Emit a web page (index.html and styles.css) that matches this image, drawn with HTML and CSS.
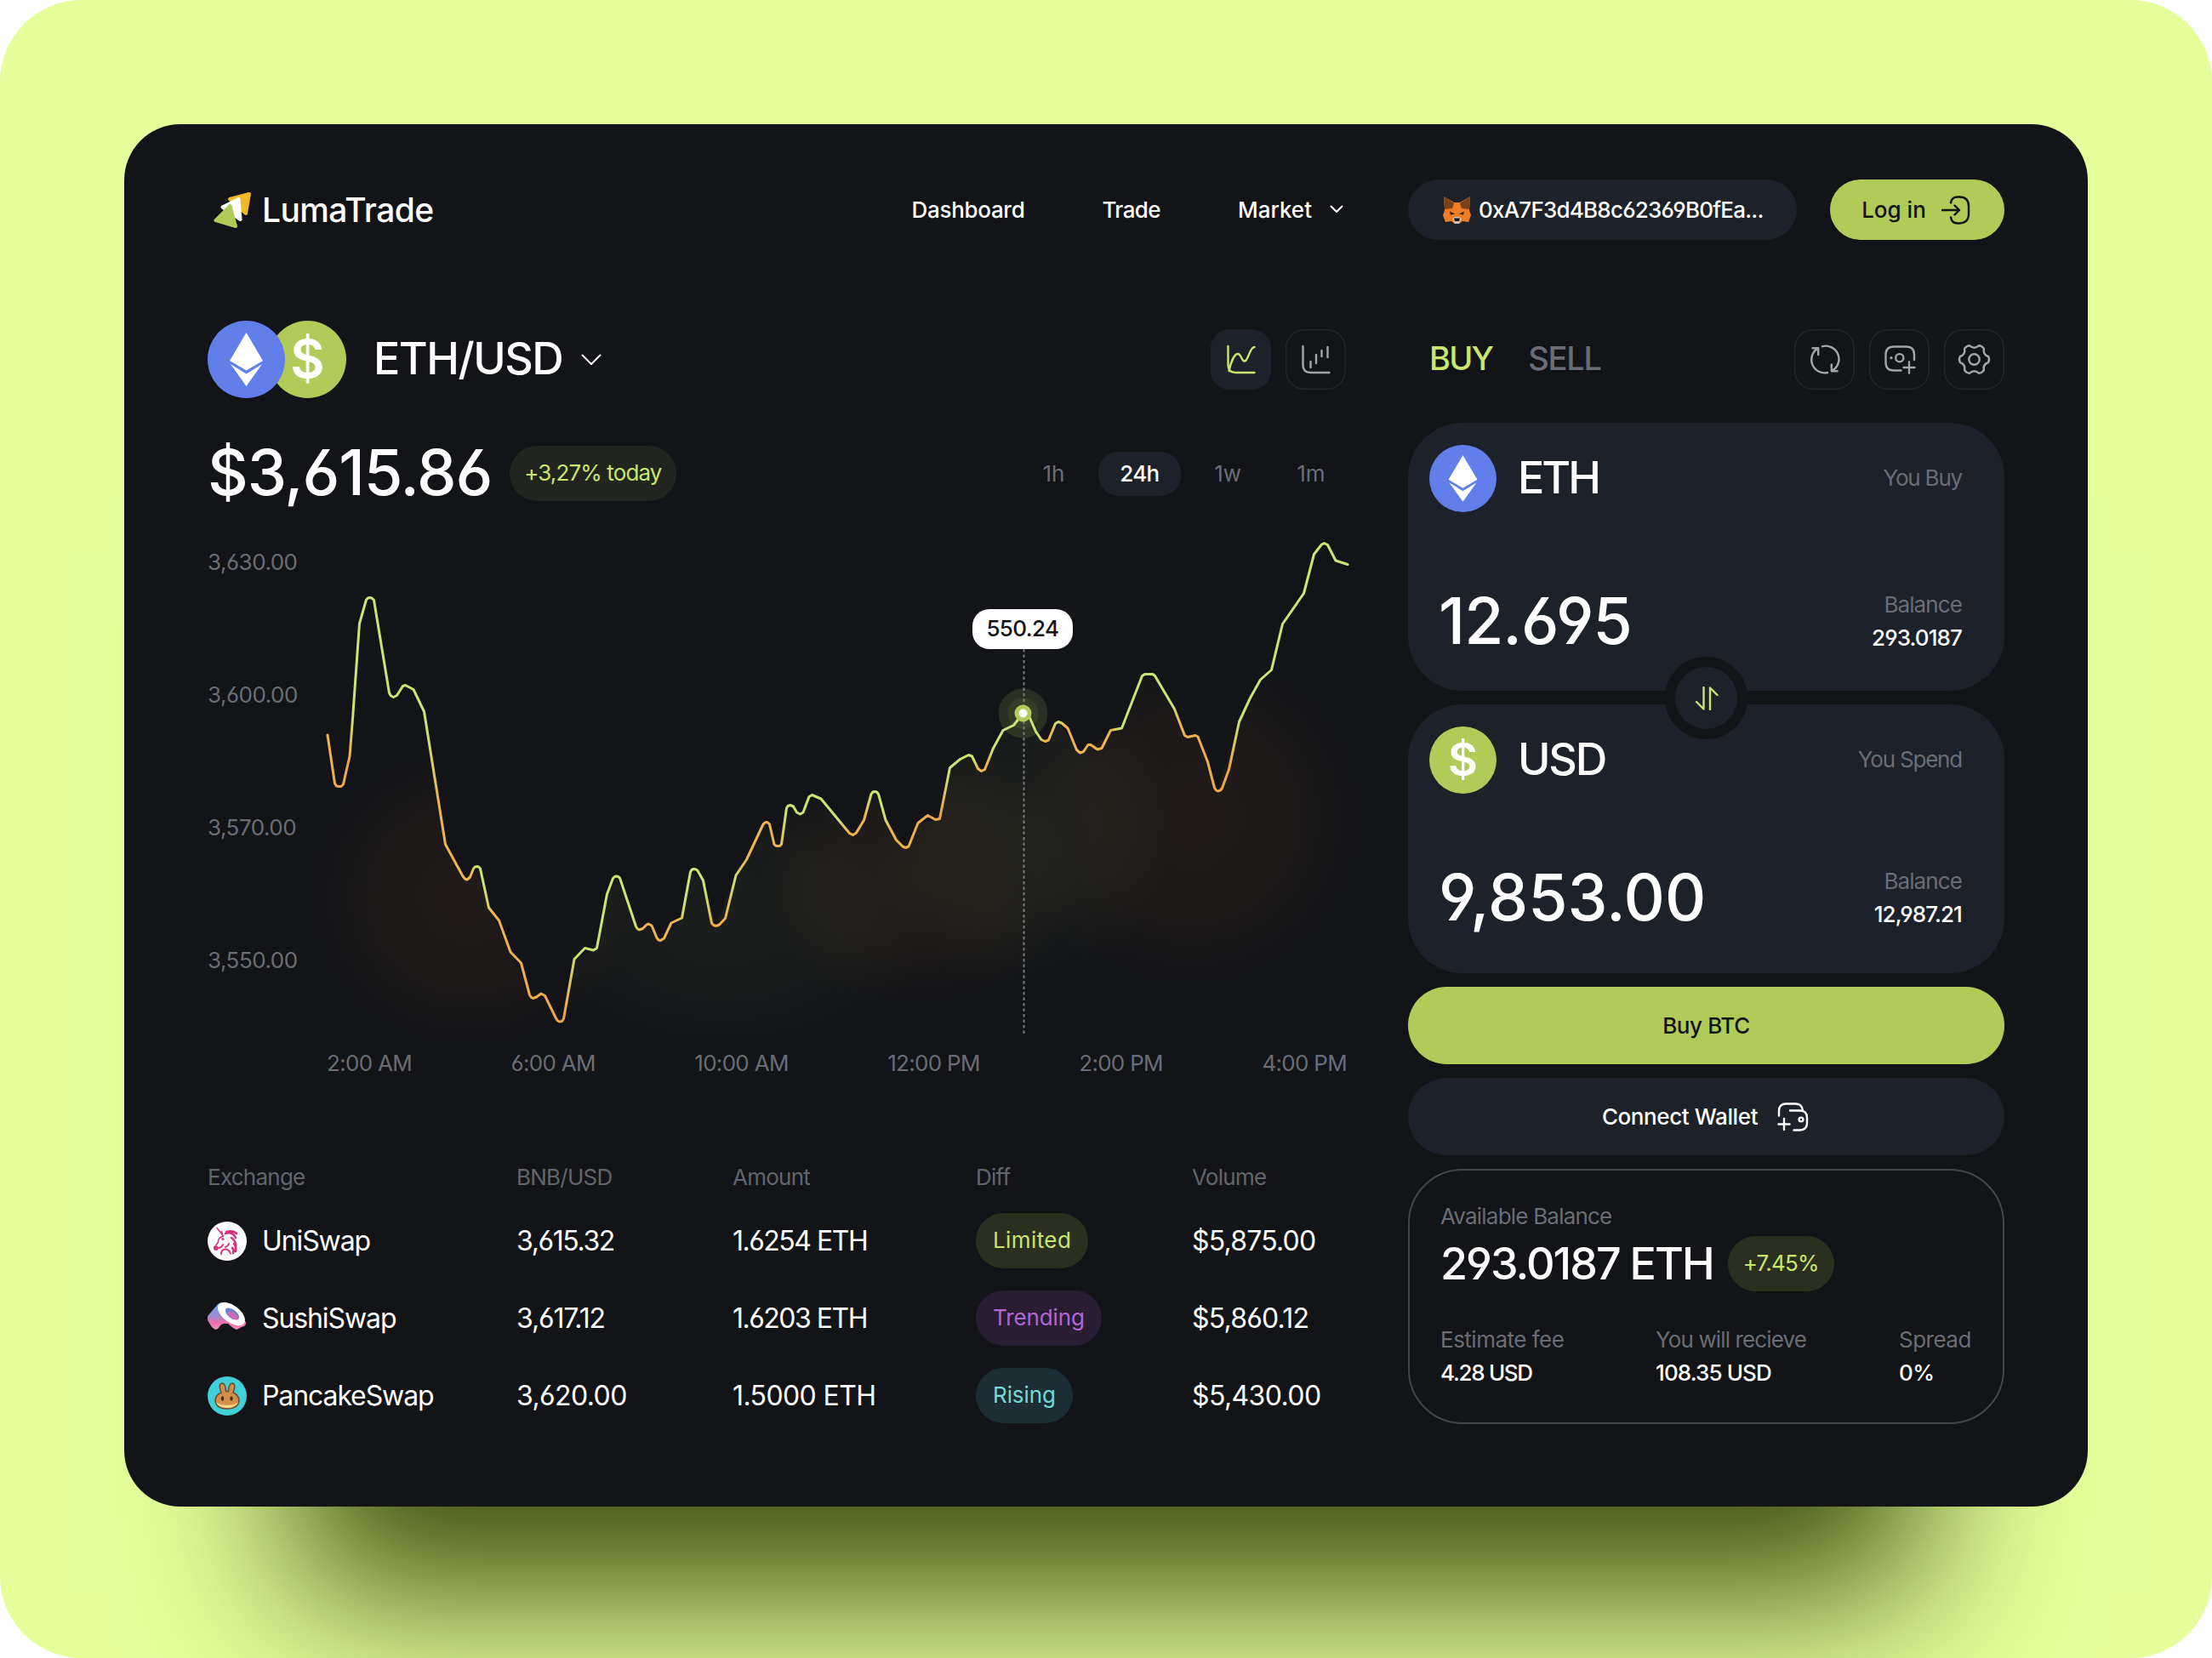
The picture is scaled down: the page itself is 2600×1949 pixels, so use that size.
FILE: index.html
```html
<!DOCTYPE html>
<html lang="en">
<head>
<meta charset="utf-8">
<title>LumaTrade</title>
<link rel="stylesheet" href="styles.css">
</head>
<body>
<div class="stage">
<main class="card">
  <header class="header">
    <div class="header-left">
      <a class="logo">
        <svg class="logo-mark" viewBox="0 0 50 46" width="50" height="46">
          <g stroke-width="4" stroke-linejoin="round">
            <path d="M22 10 45 4 41 27z" fill="#f0b824" stroke="#f0b824"/>
            <path d="M13.500 19.500 32.500 10 34.500 34z" fill="#fff" stroke="#fff"/>
            <path d="M22.500 18 5.500 35 29 42z" fill="#b1cb58" stroke="#b1cb58"/>
          </g>
        </svg>
        <span class="logo-name">LumaTrade</span>
      </a>
      <nav class="nav">
        <a class="nav-dashboard">Dashboard</a>
        <a class="nav-trade">Trade</a>
        <a class="nav-menu"><span>Market</span><svg width="16" height="10" viewBox="0 0 16 10"><path d="M1.500 1.500 8 8l6.500-6.500" class="line line-thin"/></svg></a>
      </nav>
    </div>
    <div class="header-right">
      <div class="wallet">
        <svg width="33" height="32" viewBox="0 0 33 32">
          <path d="M1 0 13 7h7L32 0l-1 16 2 6-3 8-7-1-4 3h-5l-4-3-7 1-3-8 2-6z" fill="#ee7d23"/>
          <path d="M1 0 13 8l-2 6-9 1zM32 0 20 8l2 6 9 1z" fill="#7d3f17"/>
          <path d="M8 17.500l6 3-5 1zM25 17.500l-6 3 5 1z" fill="#2a2018"/>
          <path d="M11 26l3-2h5l3 2-3 6h-5z" fill="#cfc3ba"/>
          <path d="M13 25.500h7l-1 3.500h-5z" fill="#17171a"/>
        </svg>
        <span class="address">0xA7F3d4B8c62369B0fEa...</span>
      </div>
      <button class="login"><span>Log in</span>
        <svg width="36" height="36" viewBox="0 0 36 36"><path d="M12 9.500Q13 2.500 20 2.500h2q11 0 11 11v9q0 11-11 11h-2q-7 0-8-7M2 18h20M16.500 12.500 22 18l-5.500 5.500" class="line"/></svg>
      </button>
    </div>
  </header>

  <div class="columns">
    <section class="market">
      <div class="pair-row">
        <div class="pair">
          <div class="coins">
            <svg class="coin coin-front" width="91" height="91" viewBox="0 0 91 91"><circle cx="45.500" cy="45.500" r="45.500" fill="#627eea"/><path d="M45.500 14 26 47l19.500 11.500L65 47zM27 51l18.500 11.500L64 51 45.500 77z" fill="#fff"/></svg>
            <svg class="coin coin-back" width="91" height="91" viewBox="0 0 91 91"><circle cx="45.500" cy="45.500" r="45.500" fill="#b1cb58"/><text x="45.500" y="66.500" text-anchor="middle" class="coin-sign">$</text></svg>
          </div>
          <span class="pair-name">ETH/USD</span>
          <svg width="24" height="14" viewBox="0 0 24 14"><path d="M1.500 1.500 12 12 22.500 1.500" class="line line-thin"/></svg>
        </div>
        <div class="tools market-tools">
          <button class="tool tool-active"><svg viewBox="0 0 71 71"><path d="M20.500 20v22q0 9 9 9h22M21.500 49C24 38 28 29 32 29s4 8.500 8 8.500S46 21 51.500 21" class="line"/></svg></button>
          <button class="tool"><svg viewBox="0 0 71 71"><path d="M20.500 20v22q0 9 9 9h22M29.500 38v7M36 30v10M42.500 25v7M49.500 21v12" class="line"/></svg></button>
        </div>
      </div>
      <div class="price-row">
        <span class="price">$3,615.86</span>
        <span class="pill pill-dim">+3,27% today</span>
        <div class="ranges"><span>1h</span><span class="range-active">24h</span><span>1w</span><span>1m</span></div>
      </div>
      <div class="chart">
        <div class="y-axis"><span>3,630.00</span><span>3,600.00</span><span>3,570.00</span><span>3,550.00</span></div>
        <div class="x-axis"><span>2:00 AM</span><span>6:00 AM</span><span>10:00 AM</span><span>12:00 PM</span><span>2:00 PM</span><span>4:00 PM</span></div>
        <svg class="plot" viewBox="244 620 1380 650" width="1380" height="650">
          <defs>
            <linearGradient id="trend" gradientUnits="userSpaceOnUse" x1="385" y1="0" x2="1585" y2="0">
              <stop offset="0" stop-color="#f0b350"/><stop offset=".021" stop-color="#f0a548"/><stop offset=".025" stop-color="#c9e672"/>
              <stop offset=".097" stop-color="#c9e672"/><stop offset=".108" stop-color="#f0b350"/><stop offset=".140" stop-color="#f0b350"/>
              <stop offset=".146" stop-color="#c9e672"/><stop offset=".153" stop-color="#c9e672"/><stop offset=".162" stop-color="#f0b350"/>
              <stop offset=".232" stop-color="#f0a548"/><stop offset=".244" stop-color="#c9e672"/><stop offset=".300" stop-color="#c9e672"/>
              <stop offset=".308" stop-color="#f0b350"/><stop offset=".344" stop-color="#f0b350"/><stop offset=".350" stop-color="#c9e672"/>
              <stop offset=".370" stop-color="#c9e672"/><stop offset=".378" stop-color="#f0a548"/><stop offset=".390" stop-color="#f0b350"/>
              <stop offset=".399" stop-color="#c9e672"/><stop offset=".408" stop-color="#f0b350"/><stop offset=".443" stop-color="#f0b350"/>
              <stop offset=".449" stop-color="#c9e672"/><stop offset=".500" stop-color="#c9e672"/><stop offset=".510" stop-color="#f0b350"/>
              <stop offset=".526" stop-color="#f0b350"/><stop offset=".533" stop-color="#c9e672"/><stop offset=".544" stop-color="#c9e672"/>
              <stop offset=".552" stop-color="#f0b350"/><stop offset=".601" stop-color="#f0a548"/><stop offset=".609" stop-color="#c9e672"/>
              <stop offset=".632" stop-color="#c9e672"/><stop offset=".638" stop-color="#f0b350"/><stop offset=".646" stop-color="#f0b350"/>
              <stop offset=".652" stop-color="#c9e672"/><stop offset=".696" stop-color="#c9e672"/><stop offset=".702" stop-color="#f0b350"/>
              <stop offset=".709" stop-color="#f0b350"/><stop offset=".715" stop-color="#c9e672"/><stop offset=".722" stop-color="#f0b350"/>
              <stop offset=".768" stop-color="#f0b350"/><stop offset=".776" stop-color="#c9e672"/><stop offset=".826" stop-color="#c9e672"/>
              <stop offset=".836" stop-color="#f0b350"/><stop offset=".883" stop-color="#f0a548"/><stop offset=".893" stop-color="#c9e672"/>
              <stop offset="1" stop-color="#c9e672"/>
            </linearGradient>
            <radialGradient id="warm"><stop offset="0" stop-color="#ff8c32" stop-opacity=".065"/><stop offset=".55" stop-color="#ff8c32" stop-opacity=".045"/><stop offset="1" stop-color="#ff8c32" stop-opacity="0"/></radialGradient>
            <radialGradient id="fresh"><stop offset="0" stop-color="#c9e672" stop-opacity=".05"/><stop offset=".55" stop-color="#c9e672" stop-opacity=".035"/><stop offset="1" stop-color="#c9e672" stop-opacity="0"/></radialGradient>
            <clipPath id="under"><path d="M330 1270V863H385L393.500 921 403.500 922 411 889 422.500 733 434.500 702 457.500 814 498.500 836.500 523.500 992.500 549 1034 564.500 1021 574.500 1067 600 1119 626.500 1173 636 1168 657.500 1201 675 1127.500 701.500 1114.500 713.500 1051 724.500 1030 751.500 1093 762 1086 776.500 1105.500 801.500 1079 811.500 1025 826.500 1035 841.500 1088.500 865 1029 900.500 966.500 914 994.500 924.500 950 940.500 957 954.500 934.500 1002.500 981.500 1028 930.500 1041 964 1064.500 996.500 1079 967.500 1104.500 962.500 1116.500 902.500 1138.500 887.500 1153.500 906.500 1179 858.500 1202.500 838.500 1228.500 871.500 1244 848.500 1269.500 885 1318.500 856 1345.500 792.500 1355 792.500 1396 866.500 1408 866 1431.500 930 1456.500 848.500 1494.500 787.500 1507.500 733.500 1556.500 638.500 1584 663.500 1624 700V1270z"/></clipPath>
          </defs>
          <g clip-path="url(#under)">
            <ellipse cx="550" cy="1055" rx="200" ry="190" fill="url(#warm)"/>
            <ellipse cx="850" cy="1080" rx="250" ry="165" fill="url(#fresh)"/>
            <ellipse cx="1080" cy="1030" rx="190" ry="160" fill="url(#warm)"/>
            <ellipse cx="1200" cy="970" rx="180" ry="200" fill="url(#fresh)"/>
            <ellipse cx="1400" cy="960" rx="215" ry="215" fill="url(#warm)"/>
          </g>
          <circle cx="1202.500" cy="838.500" r="29" fill="#c9e672" fill-opacity=".13"/>
          <circle cx="1202.500" cy="838.500" r="18" fill="#c9e672" fill-opacity=".08"/>
          <path d="M1203.500 763V1216" stroke="#77797c" stroke-width="2" stroke-dasharray="3.500 3"/>
          <polyline class="series" points="385,864 393.500,921 395.500,924 398,924.500 401,924.500 403.500,922 411,889 414.500,845 422.500,733 430.500,705 432.500,703 434.500,702.500 437,703 439.500,705.500 457.500,814.500 459.500,818 462.500,819.500 466.500,817.500 473.500,806.500 476.500,805.500 486,810.500 498.500,836.500 523.500,992.500 544,1030 546.500,1033 549,1034 552.500,1031 556.500,1021 558.500,1019 560.500,1018.500 562.500,1019 564.500,1021 574.500,1067 586.500,1082 600,1119 612.500,1132 622.500,1169.500 624.500,1172.500 626.500,1173.500 630.500,1172 636,1168 640.500,1170.500 653.500,1197 655.500,1200 657.500,1201 660.500,1200.500 662.500,1197.500 675,1127.500 687.500,1114.500 697.500,1117 701.500,1114.500 713.500,1051 720.500,1032.500 722.500,1030.500 724.500,1030 726.500,1030.500 728.500,1032 747.500,1089 749.500,1092 751.500,1093 755.500,1091.500 760,1087 762,1086 766,1088 772,1102.500 774,1105 776.500,1105.500 780.500,1103 789,1085 801.500,1079 811.500,1025 813,1022.500 815.500,1021.500 818,1022 820,1023.500 826.500,1035 836.500,1085 838.500,1087.500 841.500,1088.500 845.500,1087 852.500,1079.500 865,1029 877.500,1010.500 896.500,970 898.500,967.500 900.500,966.500 902.500,967 904.500,969 910,992.500 911.500,994 914,994.500 916.500,994.500 918.500,992.500 924.500,950 926,947.500 929,946.500 932.500,948 936.500,955 940.500,957 944,955 951,936.500 954.500,934.500 965,939 998.500,979.500 1002.500,981.500 1006.500,979 1015.500,964 1024,933.500 1026,931 1028,930.500 1030.500,931 1032.500,933.500 1041,964 1053.500,987.500 1061,995 1064.500,996.500 1068,995 1079,967.500 1090.500,958.500 1099.500,963.500 1104.500,962.500 1116.500,902.500 1128.500,892.500 1138.500,887.500 1142.500,889 1149.500,903.500 1153.500,906.500 1157.500,904.500 1167.500,879.500 1179,858.500 1191.500,852.500 1202.500,838.500 1210.500,844 1217.500,860 1224,869.500 1228.500,871.500 1232.500,870 1240.500,850.500 1244,848.500 1248,850 1255,856 1265.500,881.500 1269.500,885 1273.500,883.500 1279,875.500 1282,875.500 1290,881 1295,879.500 1305.500,858.500 1318.500,856 1342.500,794.500 1345.500,792.500 1355,792.500 1357.500,794.500 1380.500,833.500 1392.500,864.500 1396,866.500 1405,864.500 1408,866 1419.500,895.500 1427.500,926 1429.500,929 1431.500,930 1434.500,929 1436.500,926.500 1444.500,904.500 1456.500,848.500 1469.500,820.500 1481.500,799 1494.500,787.500 1507.500,733.500 1532.500,697.500 1544.500,651.500 1553.500,640 1556.500,638.500 1560.500,640.500 1570,659 1584,663.500"/>
          <circle cx="1202.500" cy="838.500" r="7.500" fill="#fff" stroke="#b1cb58" stroke-width="5"/>
        </svg>
        <div class="tooltip">550.24</div>
      </div>
      <div class="table">
        <div class="row row-head"><span>Exchange</span><span>BNB/USD</span><span>Amount</span><span>Diff</span><span>Volume</span></div>
        <div class="row">
          <span class="exchange">
            <svg width="46" height="46" viewBox="0 0 46 46">
              <circle cx="23" cy="23" r="23" fill="#fff"/>
              <g fill="none" stroke="#d6317f" stroke-linecap="round" stroke-linejoin="round">
                <path d="M11 7.500 18.500 17M16.500 11.500l1.500 5M18.500 17Q12 19 12.500 24L8 30.500" stroke-width="1.500"/>
                <path d="M21 14q8-3 12 5M22 12q8-2 12 2M28 19q6 4 5 11M31 26q3 4 2 9M29 31q3 3 1 6" stroke-width="2.600"/>
                <path d="M13 31q4-1 5-4M16 38q0-5.500 5-5.500 4 0 6 5M21 30q3-1 4-4" stroke-width="2"/>
              </g>
              <path d="M7.500 29q3-1.500 5.500 1.500 0 4-4 3.500-3-1-1.500-5z" fill="#d6317f"/>
              <circle cx="18" cy="20.500" r="1.600" fill="#d6317f"/>
            </svg>UniSwap</span>
          <span class="rate">3,615.32</span><span class="amount">1.6254 ETH</span>
          <span><span class="pill pill-lime pill-wide">Limited</span></span><span class="volume">$5,875.00</span>
        </div>
        <div class="row">
          <span class="exchange">
            <svg width="46" height="46" viewBox="0 0 46 46">
              <defs><linearGradient id="roll" x1="0" y1="0" x2="0" y2="1"><stop offset="0" stop-color="#4fa9ea"/><stop offset=".5" stop-color="#a08ad0"/><stop offset=".75" stop-color="#ee6fa8"/><stop offset="1" stop-color="#f092c4"/></linearGradient></defs>
              <path d="M12 6Q15 3 22 5L45 27q1 5-5 6l-6 3-4-2-6-5h-5l-3 1-4 5-3 1-4-3-5-8q-1-3 1-6z" fill="url(#roll)"/>
              <ellipse cx="28" cy="17.500" rx="18.500" ry="10" transform="rotate(37 28 17.500)" fill="#fff"/>
              <ellipse cx="29" cy="17.500" rx="9.500" ry="5" transform="rotate(37 29 17.500)" fill="#6c7fd0"/>
              <ellipse cx="30" cy="19.500" rx="7" ry="3" transform="rotate(37 30 19.500)" fill="#d765ae"/>
            </svg>SushiSwap</span>
          <span class="rate">3,617.12</span><span class="amount">1.6203 ETH</span>
          <span><span class="pill pill-violet">Trending</span></span><span class="volume">$5,860.12</span>
        </div>
        <div class="row">
          <span class="exchange">
            <svg width="46" height="46" viewBox="0 0 46 46">
              <circle cx="23" cy="23" r="23" fill="#41d0da"/>
              <path d="M16 19q-4-10 1-11 4 0 4.500 9.500h3Q25 8 29 8q5 1 1 11 7 3 7 9.500Q36 38 23 38T9 28.500Q9 22 16 19z" fill="#d38f4a" stroke="#6b4a2b" stroke-width="1.500"/>
              <path d="M10 30.500Q13 37 23 37t13-6.500Q30 34 23 34t-13-3.500z" fill="#f9dc8e"/>
              <ellipse cx="17.500" cy="26" rx="1.700" ry="2.700" fill="#4a2c1a"/><ellipse cx="28" cy="26" rx="1.700" ry="2.700" fill="#4a2c1a"/>
            </svg>PancakeSwap</span>
          <span class="rate">3,620.00</span><span class="amount">1.5000 ETH</span>
          <span><span class="pill pill-cyan">Rising</span></span><span class="volume">$5,430.00</span>
        </div>
      </div>
    </section>

    <section class="trade">
      <div class="trade-head">
        <div class="tabs"><span class="tab-active">BUY</span><span>SELL</span></div>
        <div class="tools">
          <button class="tool"><svg viewBox="0 0 71 71"><path d="M33 20.200A15.500 15.500 0 0 1 44 49M50.500 49.200H43.800V41.500M39 51A15.500 15.500 0 0 1 28 22.400M21.500 22.200H28.200V30" class="line"/></svg></button>
          <button class="tool"><svg viewBox="0 0 71 71"><path d="M37.500 48.500H29q-9.500 0-9.500-9.500V30q0-9.500 9.500-9.500h14.500Q53 20.500 53 30v6M47 38.500v13M40.500 45h13" class="line"/><circle cx="35.800" cy="33.700" r="4.600" class="line"/><circle cx="26" cy="33.700" r="1.600" fill="currentColor"/></svg></button>
          <button class="tool"><svg viewBox="-35.500 -35.500 71 71"><path d="M16.600-3.500Q18.500 0 16.600 3.500 10 5.750 11.400 12.600 9.250 16 5.250 16.200 0 11.500-5.250 16.200-9.250 16-11.400 12.600-10 5.750-16.600 3.500-18.500 0-16.600-3.500-10-5.750-11.400-12.600-9.250-16-5.250-16.200 0-11.500 5.250-16.200 9.250-16 11.400-12.600 10-5.750 16.600-3.500z" class="line"/><circle r="6.200" class="line"/></svg></button>
        </div>
      </div>
      <div class="swap">
        <div class="panel panel-buy">
          <div class="panel-top"><svg class="coin" width="79" height="79" viewBox="0 0 91 91"><circle cx="45.500" cy="45.500" r="45.500" fill="#627eea"/><path d="M45.500 14 26 47l19.500 11.500L65 47zM27 51l18.500 11.500L64 51 45.500 77z" fill="#fff"/></svg><span class="ticker ticker-eth">ETH</span><span class="hint">You Buy</span></div>
          <div class="panel-bottom"><span class="sum sum-eth">12.695</span><span class="holding"><span class="muted">Balance</span><b>293.0187</b></span></div>
        </div>
        <div class="panel panel-spend">
          <div class="panel-top"><svg class="coin" width="79" height="79" viewBox="0 0 91 91"><circle cx="45.500" cy="45.500" r="45.500" fill="#b1cb58"/><text x="45.500" y="66.500" text-anchor="middle" class="coin-sign">$</text></svg><span class="ticker ticker-usd">USD</span><span class="hint">You Spend</span></div>
          <div class="panel-bottom"><span class="sum sum-usd">9,853.00</span><span class="holding"><span class="muted">Balance</span><b>12,987.21</b></span></div>
        </div>
        <button class="flip"><svg width="28" height="28" viewBox="0 0 28 28"><path d="M10.500 1V26.500L2 18M18 27V1.500L26.500 10" class="line"/></svg></button>
      </div>
      <button class="action action-buy"><span>Buy BTC</span></button>
      <button class="action action-wallet"><span>Connect Wallet</span><svg width="38" height="38" viewBox="0 0 38 38"><path d="M3 17.500V12q0-8.500 8.500-8.500h11Q30 3.500 31 11.500M16 11.500h11.500q8.500 0 8.500 8.500v6q0 8.500-8.500 8.500H20.500M9 21v13M2.500 27.500h13" class="line"/><circle cx="29" cy="22" r="2.400" class="line"/></svg></button>
      <div class="balance">
        <span class="muted balance-title">Available Balance</span>
        <div class="total"><span class="total-sum">293.0187 ETH</span><span class="pill pill-lime">+7.45%</span></div>
        <div class="stats">
          <span><span class="muted">Estimate fee</span><b>4.28 USD</b></span>
          <span><span class="muted">You will recieve</span><b>108.35 USD</b></span>
          <span><span class="muted">Spread</span><b>0%</b></span>
        </div>
      </div>
    </section>
  </div>
</main>
</div>
</body>
</html>
```
FILE: styles.css
```css
* { box-sizing: border-box; margin: 0; }
body { background: #fff; font-family: Inter, "Liberation Sans", sans-serif; font-size: 26px; line-height: 39px; color: #fff; font-feature-settings: "cv03", "cv04"; }
button { border: 0; background: none; padding: 0; font: inherit; color: inherit; font-feature-settings: inherit; }
svg { display: block; flex: none; }
b { font-weight: 500; }
.line { fill: none; stroke: currentColor; stroke-width: 2.4; stroke-linecap: round; stroke-linejoin: round; }
.line-thin { stroke-width: 2; }
.stage { width: 2600px; height: 1949px; padding: 146px; border-radius: 96px; background: #e5ff9a; overflow: hidden; }
.card { height: 1625px; padding: 65px 98px; border-radius: 66px; background: #121418; box-shadow: 0 300px 180px -200px #3a4b0c; }

.header { display: grid; grid-template-columns: 1340px 701px; column-gap: 71px; height: 71px; font-weight: 500; }
.header-left, .header-right { display: flex; justify-content: space-between; align-items: center; }
.header-left { padding: 0 5px 1px 4px; }
.logo { display: flex; align-items: center; gap: 10px; }
.logo-mark { margin-top: 2px; }
.logo-name { font-size: 39px; font-weight: 500; letter-spacing: -0.6px; }
.nav { display: flex; gap: 91px; }
.nav-dashboard { letter-spacing: -0.3px; }
.nav-trade { letter-spacing: -0.6px; }
.nav-menu { display: flex; align-items: center; gap: 21px; }
.wallet { display: flex; align-items: center; gap: 9px; width: 457px; height: 71px; padding-left: 41px; border-radius: 36px; background: #1d2129; }
.address { letter-spacing: -0.78px; padding-bottom: 1px; }
.login { display: flex; align-items: center; justify-content: center; gap: 17px; width: 205px; height: 71px; padding-right: 2px; border-radius: 36px; background: #b1cb58; color: #121418; }
.login span { padding-bottom: 1px; }

.columns { display: grid; grid-template-columns: 1340px 701px; column-gap: 71px; margin-top: 95px; }
.pair-row { display: flex; justify-content: space-between; align-items: center; height: 91px; }
.pair { display: flex; align-items: center; gap: 22px; }
.coins { display: flex; }
.coin-front { position: relative; z-index: 1; }
.coin-back { margin-left: -19px; }
.coin-sign { font-size: 62px; font-weight: 600; fill: #fff; }
.pair-name { font-size: 52px; font-weight: 500; letter-spacing: -1.5px; margin-left: 10px; padding-bottom: 2px; }
.tools { display: flex; gap: 17px; }
.market-tools { margin-right: 2px; }
.tool { width: 71px; height: 71px; border-radius: 22px; color: #a3a5aa; box-shadow: inset 0 0 0 1.500px #22252a; }
.tool-active { background: #1d2129; color: #c9e66e; box-shadow: none; }

.price-row { display: flex; align-items: center; height: 64px; margin-top: 56px; }
.price { font-size: 74px; font-weight: 500; letter-spacing: -1.15px; padding-bottom: 1px; }
.pill { display: inline-block; height: 65px; line-height: 64px; padding: 0 20px; border-radius: 33px; }
.pill-dim { background: #22251f; color: #c9e66e; margin-left: 21px; padding: 0 17px; letter-spacing: -0.88px; }
.pill-lime { background: #2b2f20; color: #c9e66e; }
.pill-violet { background: #281d33; color: #b465d6; }
.pill-cyan { background: #1c2e33; color: #74d9da; }
.ranges { display: flex; gap: 14px; margin: 1px 1px 0 auto; color: #6a6d75; }
.ranges span { padding: 0 25.5px; height: 52px; line-height: 51px; border-radius: 24px; }
.ranges .range-active { background: #1d2129; color: #fff; font-weight: 500; letter-spacing: -0.8px; }

.chart { position: relative; height: 650px; margin-top: 32px; padding-top: 21px; color: #6a6d75; letter-spacing: -0.5px; }
.y-axis { display: flex; flex-direction: column; justify-content: space-between; height: 508px; line-height: 40px; }
.x-axis { display: flex; justify-content: space-between; margin: 81px 1px 0 140px; line-height: 40px; letter-spacing: -0.7px; }
.plot { position: absolute; left: 0; top: 0; }
.series { fill: none; stroke: url(#trend); stroke-width: 3; stroke-linejoin: round; stroke-linecap: round; }
.tooltip { position: absolute; left: 899px; top: 96px; width: 118px; height: 47px; line-height: 46px; border-radius: 20px; background: #fff; color: #121418; font-weight: 500; text-align: center; letter-spacing: -0.6px; }

.table { margin-top: 93px; }
.row { display: grid; grid-template-columns: 363px 254px 286px 254px 1fr; align-items: center; height: 91px; font-size: 32px; }
.row-head { height: 40px; margin-bottom: 10px; font-size: 26px; color: #62656c; letter-spacing: -0.75px; }
.exchange { display: flex; align-items: center; gap: 18px; letter-spacing: -1.1px; }
.rate { letter-spacing: -1.4px; }
.amount { letter-spacing: -1.5px; }
.volume { letter-spacing: -0.8px; }
.row:nth-child(3) .rate { letter-spacing: -1.13px; }
.row:nth-child(4) .rate, .row:nth-child(4) .amount, .row:nth-child(4) .volume { letter-spacing: -0.6px; }
.row .pill { font-size: 26px; display: table; letter-spacing: -0.1px; }
.row .pill-wide { letter-spacing: 0.4px; }

.trade { padding-top: 10px; display: flex; flex-direction: column; gap: 16px; }
.trade-head { display: flex; justify-content: space-between; align-items: center; height: 71px; padding-left: 25px; margin-bottom: 23px; }
.tabs { display: flex; gap: 42px; padding-bottom: 2px; font-size: 38px; font-weight: 500; letter-spacing: -1.2px; color: #6a6d75; }
.tab-active { color: #c9e66e; letter-spacing: -1.8px; }
.swap { position: relative; display: flex; flex-direction: column; gap: 16px; }
.panel { display: flex; flex-direction: column; justify-content: space-between; height: 315px; padding: 26px 50px 43px 25px; border-radius: 64px; background: #1d2129; }
.panel-spend { height: 316px; padding-bottom: 50px; }
.panel-top { display: flex; align-items: center; }
.ticker { margin-left: 25px; padding-bottom: 3px; font-size: 52px; font-weight: 500; letter-spacing: -3px; }
.ticker-usd { letter-spacing: -2.2px; }
.hint { margin-left: auto; padding-bottom: 2px; color: #6a6d75; letter-spacing: -1.2px; }
.panel-bottom { display: flex; justify-content: space-between; align-items: center; padding-left: 11px; }
.sum { font-size: 75px; font-weight: 500; padding-bottom: 2px; }
.sum-eth { letter-spacing: -1px; }
.sum-usd { letter-spacing: 0; }
.holding { display: flex; flex-direction: column; text-align: right; letter-spacing: -0.9px; }
.muted { color: #6a6d75; }
.flip { position: absolute; left: 302px; top: 275px; display: grid; place-items: center; width: 97px; height: 97px; border-radius: 50%; border: 12px solid #121418; background: #1d2129; color: #c9e66e; }
.action { display: flex; align-items: center; justify-content: center; gap: 22px; height: 91px; border-radius: 46px; font-weight: 500; letter-spacing: -0.4px; }
.action-buy { background: #b1cb58; color: #121418; }
.action-wallet { background: #1d2129; padding-right: 2px; }
.balance { height: 300px; padding: 33.500px 36px; border: 2px solid #44464b; border-radius: 64px; display: flex; flex-direction: column; }
.balance-title { letter-spacing: -0.8px; }
.total { display: flex; align-items: center; gap: 17px; margin-top: 4.500px; height: 64px; }
.total-sum { font-size: 52px; font-weight: 500; letter-spacing: -1.95px; }
.total .pill { padding: 0 18px; letter-spacing: -0.8px; }
.stats { display: grid; grid-template-columns: 253px 286px 1fr; margin-top: 37.500px; letter-spacing: -0.5px; }
.stats > span { display: flex; flex-direction: column; }
.stats > span:nth-child(2) { letter-spacing: -0.88px; }
.stats > span:nth-child(1) b { letter-spacing: -1.3px; }
```
